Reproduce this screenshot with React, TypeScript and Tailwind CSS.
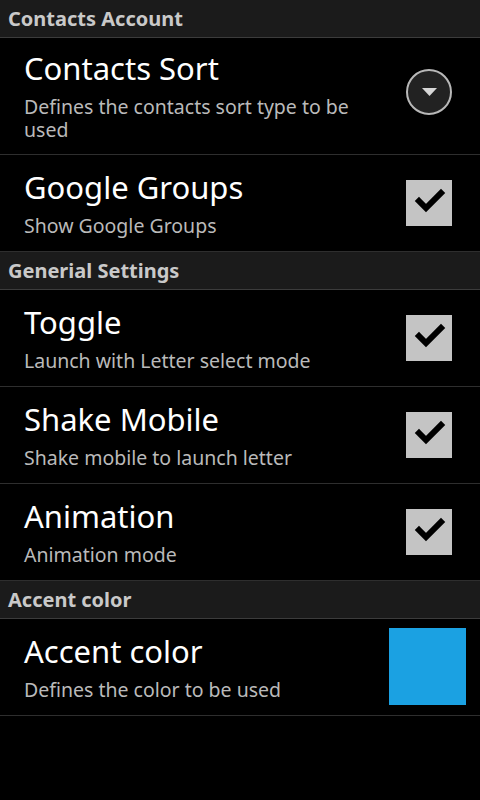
import React from "react";

type Widget = "dropdown" | "check" | "color";

type Pref = {
  title: string;
  summary: string;
  widget: Widget;
};

type Section = {
  header: string;
  items: Pref[];
};

const sections: Section[] = [
  {
    header: "Contacts Account",
    items: [
      {
        title: "Contacts Sort",
        summary: "Defines the contacts sort type to be used",
        widget: "dropdown",
      },
      { title: "Google Groups", summary: "Show Google Groups", widget: "check" },
    ],
  },
  {
    header: "Generial Settings",
    items: [
      { title: "Toggle", summary: "Launch with Letter select mode", widget: "check" },
      { title: "Shake Mobile", summary: "Shake mobile to launch letter", widget: "check" },
      { title: "Animation", summary: "Animation mode", widget: "check" },
    ],
  },
  {
    header: "Accent color",
    items: [
      { title: "Accent color", summary: "Defines the color to be used", widget: "color" },
    ],
  },
];

const Dropdown = () => (
  <div className="mr-[28px] mb-[8px] flex h-[46px] w-[46px] items-center justify-center rounded-full border-2 border-[#b8b8b8] bg-[#222]">
    <svg width="15" height="8" viewBox="0 0 15 8" className="mt-[1px]">
      <polygon points="0,0 15,0 7.5,8" fill="#d6d6d6" />
    </svg>
  </div>
);

const Check = () => (
  <div className="mr-[28px] flex h-[46px] w-[46px] items-center justify-center bg-[#c4c4c4]">
    <svg width="46" height="46" viewBox="0 0 46 46">
      <path
        d="M13 21 L20 28 L35 13"
        fill="none"
        stroke="#000"
        strokeWidth="6"
        strokeLinecap="square"
        strokeLinejoin="miter"
      />
    </svg>
  </div>
);

const Swatch = () => <div className="-my-[3px] mr-[14px] h-[77px] w-[77px] bg-[#1ba1e2]" />;

const PrefRow = ({ pref }: { pref: Pref }) => (
  <div className="flex min-h-[97px] items-center border-b border-[#2e2e2e] pt-[12px] pb-[13px] pl-[24px]">
    <div className="flex-1 pr-[40px]">
      <div className="text-[31px] leading-[36px] text-white">{pref.title}</div>
      <div className="mt-[9px] text-[19.5px] leading-[23px] text-[#bababa]">{pref.summary}</div>
    </div>
    {pref.widget === "dropdown" && <Dropdown />}
    {pref.widget === "check" && <Check />}
    {pref.widget === "color" && <Swatch />}
  </div>
);

export default function App() {
  return (
    <div
      className="h-[800px] w-[480px] overflow-hidden bg-black"
      style={{ fontFamily: '"Noto Sans", "DejaVu Sans", sans-serif' }}
    >
      {sections.map((section) => (
        <div key={section.header}>
          {/* Category header */}
          <div className="h-[38px] border-b border-[#3c3c3c] bg-[#1b1b1b] pl-[8px] text-[20px] font-bold leading-[37px] text-[#c9c9c9]">
            {section.header}
          </div>
          {section.items.map((pref) => (
            <PrefRow key={pref.title} pref={pref} />
          ))}
        </div>
      ))}
    </div>
  );
}
